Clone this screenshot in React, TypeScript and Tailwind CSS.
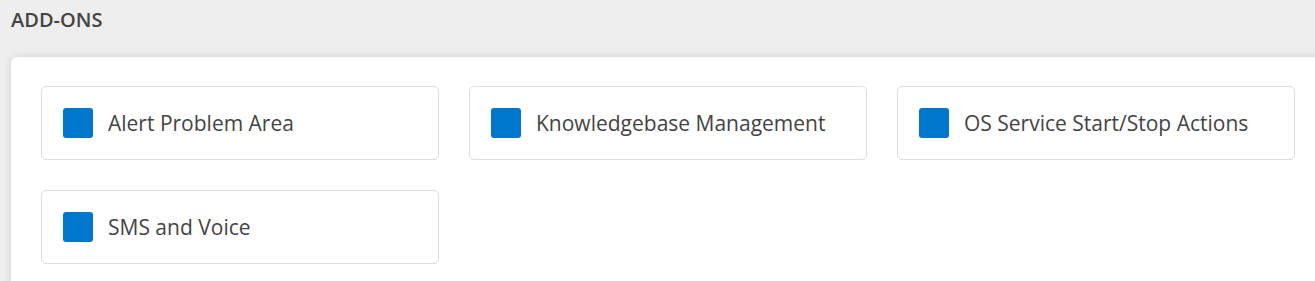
const addOns = [
  "Alert Problem Area",
  "Knowledgebase Management",
  "OS Service Start/Stop Actions",
  "SMS and Voice",
];

export default function App() {
  return (
    <div
      className="min-h-[281px] bg-[#eeeeee] overflow-hidden"
      style={{ fontFamily: '"Open Sans", sans-serif' }}
    >
      <h2 className="pl-[11px] pt-[6px] text-[20px] leading-[28px] font-semibold text-[#444444]">
        ADD-ONS
      </h2>
      <div className="ml-[11px] mt-[23px] w-[1314px] rounded-[6px] bg-white shadow-[0_0_8px_rgba(0,0,0,0.12)] px-[30px] pt-[29px] pb-[30px]">
        <div className="grid grid-cols-3 gap-x-[30px] gap-y-[30px]">
          {addOns.map(name => (
            <div
              key={name}
              className="h-[74px] flex items-center gap-[15px] rounded-[5px] border border-[#dddddd] pl-[21px]"
            >
              <div className="w-[30px] h-[30px] rounded-[3px] bg-[#0077cc]" />
              <span className="text-[21px] leading-[28px] text-[#444444]">{name}</span>
            </div>
          ))}
        </div>
      </div>
    </div>
  );
}
